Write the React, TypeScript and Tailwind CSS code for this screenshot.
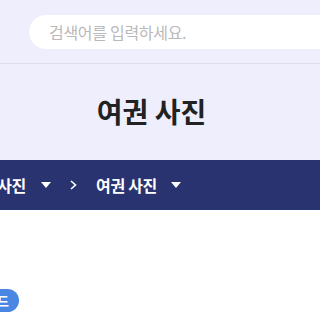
const font = { fontFamily: '"Noto Sans CJK KR", "Noto Sans", sans-serif' };

function Caret() {
  return (
    <svg width="10" height="6" viewBox="0 0 10 6" className="shrink-0">
      <path d="M0 0h10L5 6z" fill="#fff" />
    </svg>
  );
}

function Chevron() {
  return (
    <svg width="7" height="10" viewBox="0 0 7 10" className="shrink-0">
      <path d="M1 1l4.5 4L1 9" fill="none" stroke="#fff" strokeWidth="1.6" />
    </svg>
  );
}

export default function App() {
  return (
    <div className="w-[320px] h-[315px] overflow-hidden bg-white" style={font}>
      <header className="bg-[#eeeefd]">
        <div className="h-[64px] pl-[29px] pt-[15px] border-b border-[#dcdcea]">
          <div className="h-[34px] w-[340px] rounded-full bg-white flex items-center pl-[20px]">
            <span className="text-[16px] text-[#b9b9b9] tracking-[-0.3px]">검색어를 입력하세요.</span>
          </div>
        </div>
        <div className="h-[96px] flex items-center justify-center pr-[17px] pb-[2px]">
          <h1 className="text-[28px] font-bold text-[#222]">여권 사진</h1>
        </div>
      </header>
      <nav className="h-[50px] bg-[#283370] flex items-center text-white text-[16px] font-bold whitespace-nowrap">
        <div className="flex items-center -ml-[35px]">
          <span className="tracking-[-0.3px]">여권 사진</span>
          <span className="ml-[15px]"><Caret /></span>
          <span className="ml-[19px]"><Chevron /></span>
          <span className="ml-[19px] tracking-[-0.3px]">여권 사진</span>
          <span className="ml-[14px]"><Caret /></span>
        </div>
      </nav>
      <main className="pt-[79px]">
        <div className="flex -ml-[49px]">
          <button className="h-[23px] px-[10px] rounded-full bg-[#4a86e4] text-white text-[13px] font-bold flex items-center">
            다운로드
          </button>
        </div>
      </main>
    </div>
  );
}
